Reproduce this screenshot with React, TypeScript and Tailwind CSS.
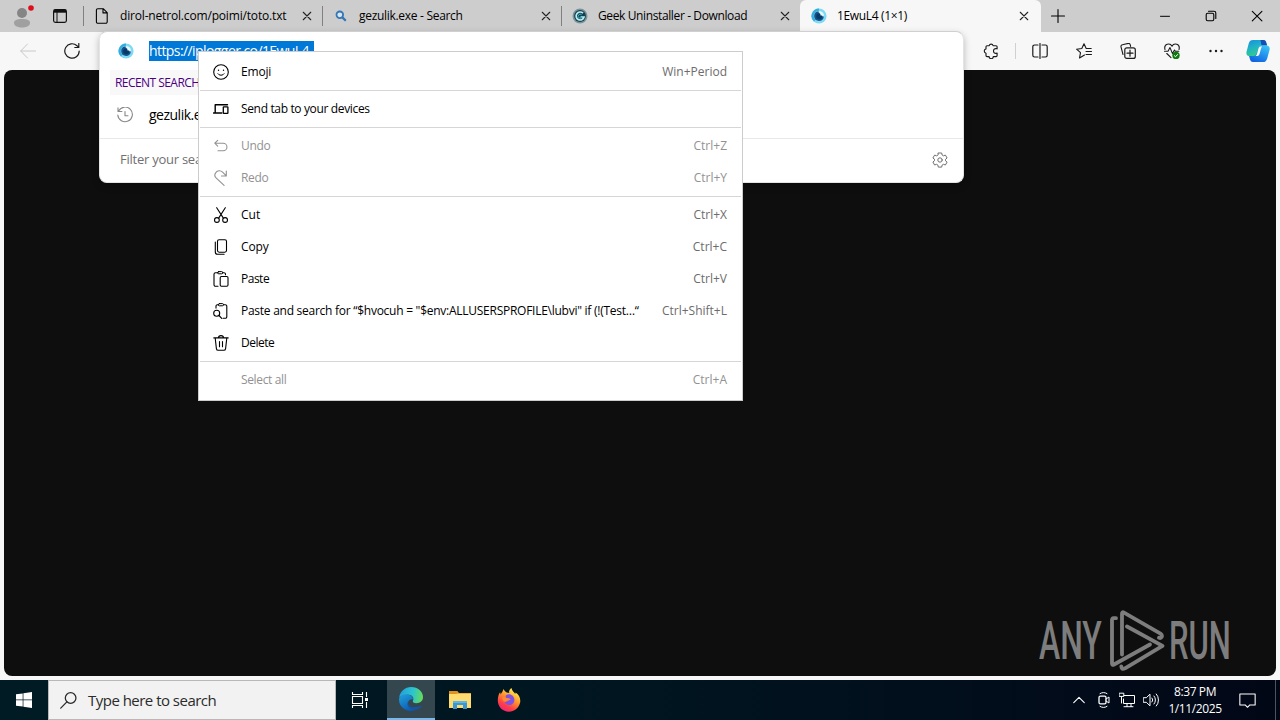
import type { ReactNode } from 'react';
import { clsx } from 'clsx';

interface IconProps {
  children: ReactNode;
  className?: string;
}

// 16px line icons, drawn with the current text colour
function Icon({ children, className }: IconProps) {
  return (
    <svg
      viewBox="0 0 16 16"
      fill="none"
      stroke="currentColor"
      strokeLinecap="round"
      strokeLinejoin="round"
      className={clsx('shrink-0', className || 'size-4')}
    >
      {children}
    </svg>
  );
}

function CloseIcon() {
  return (
    <Icon className="size-[10px] text-[#222]">
      <path d="M2 2l12 12M14 2L2 14" strokeWidth="1.7" />
    </Icon>
  );
}

function EyeLogo() {
  return (
    <svg viewBox="0 0 16 16" className="size-4 shrink-0">
      <circle cx="8" cy="8" r="7.6" fill="#7ddaf5" />
      <path d="M8 .4a7.6 7.6 0 0 0-5 13.2L8 8z" fill="#35aede" />
      <circle cx="8" cy="8" r="5.2" fill="#c4eefa" />
      <path d="M7.5 3.2a4.9 4.9 0 1 0 5.4 5.3L8.5 8z" fill="#10558c" />
      <circle cx="8.2" cy="8.2" r="3" fill="#073a6b" />
      <path d="M8.7 3.4a4.8 4.8 0 0 1 4 4H9.6z" fill="#e9faff" />
    </svg>
  );
}

function GeekLogo() {
  return (
    <svg viewBox="0 0 16 16" className="size-4 shrink-0">
      <circle cx="8" cy="8" r="7.5" fill="#7c9299" />
      <circle cx="8" cy="8" r="5.9" fill="#17404c" />
      <path d="M11 5.2A4 4 0 1 0 12 9H8.5" fill="none" stroke="#b5edf4" strokeWidth="1.7" />
      <path d="M9.6 6.8A2 2 0 1 0 10 9" fill="none" stroke="#3cb6c9" strokeWidth="1" />
    </svg>
  );
}

function SearchLogo() {
  return (
    <svg viewBox="0 0 16 16" fill="none" stroke="#3475b5" className="size-4 shrink-0">
      <circle cx="6.8" cy="6.8" r="3.3" strokeWidth="1.8" fill="#d8e7f2" />
      <path d="M9.4 9.4l3.4 3.4" strokeWidth="2.2" />
    </svg>
  );
}

function FileIcon() {
  return (
    <Icon>
      <path d="M3.8.7h5.4l4 4v9.1a1.4 1.4 0 0 1-1.4 1.4H3.8a1.4 1.4 0 0 1-1.4-1.4V2.1A1.4 1.4 0 0 1 3.8.7zM9 .8v4.1h4.1" strokeWidth="1.1" />
    </Icon>
  );
}

interface TabProps {
  icon: ReactNode;
  title: string;
  titleClass: string;
  active?: boolean;
}

function Tab({ icon, title, titleClass, active }: TabProps) {
  return (
    <div
      className={clsx(
        'flex h-8 shrink-0 items-center',
        active
          ? '-ml-px w-[241px] rounded-t-md bg-[#f7f7f7] pr-3 pl-[11px]'
          : 'w-[239px] border-r border-[#808080] pr-[10px] pl-[10px]'
      )}
    >
      {icon}
      <span className={clsx('ml-[10px] flex-1 text-xs whitespace-nowrap text-black', titleClass)}>{title}</span>
      <CloseIcon />
    </div>
  );
}

function TabBar() {
  return (
    <div className="flex h-8 shrink-0 items-center bg-[#cdcdcd]">
      <svg viewBox="0 0 24 24" className="ml-[10px] size-6 shrink-0">
        <circle cx="12" cy="9" r="5" fill="#858585" />
        <path d="M4 19c0-3 3-4 8-4s8 1 8 4-4 4.5-8 4.5S4 22 4 19z" fill="#a0a0a0" />
        <circle cx="21" cy="4" r="2.8" fill="#e00b1c" />
      </svg>
      <svg viewBox="0 0 16 16" className="ml-[18px] size-4 shrink-0" fill="none" stroke="#111">
        <rect x="1.6" y="1.6" width="12.8" height="12.8" rx="1.8" strokeWidth="1.2" />
        <path d="M2 3.2h12" strokeWidth="3" />
        <path d="M5 4v10.4" strokeWidth="1" />
      </svg>
      <div className="ml-[15px] h-5 w-px shrink-0 bg-[#808080]" />
      <div className="flex h-5 items-center overflow-hidden">
        <Tab icon={<FileIcon />} title="dirol-netrol.com/poimi/toto.txt" titleClass="tracking-[-0.17px]" />
        <Tab icon={<SearchLogo />} title="gezulik.exe - Search" titleClass="tracking-[-0.3px]" />
        <Tab icon={<GeekLogo />} title="Geek Uninstaller - Download" titleClass="tracking-[-0.38px]" />
      </div>
      <Tab icon={<EyeLogo />} title="1EwuL4 (1×1)" titleClass="tracking-[-0.35px]" active />
      <div className="flex flex-1 items-center text-black">
        <Icon className="ml-[9px] size-4">
          <path d="M8 1.5v13M1.5 8h13" strokeWidth="1.1" />
        </Icon>
        <div className="ml-auto flex">
          <div className="flex w-[46px] justify-center">
            <Icon>
              <path d="M3.5 8.3h9" />
            </Icon>
          </div>
          <div className="flex w-[46px] justify-center">
            <Icon>
              <rect x="3.2" y="5.2" width="7.6" height="7.6" rx="1.5" strokeWidth="1.1" />
              <path d="M5.5 3.2H11a1.8 1.8 0 0 1 1.8 1.8v5.5" strokeWidth="1.1" />
            </Icon>
          </div>
          <div className="flex w-[46px] justify-center">
            <Icon>
              <path d="M3.3 3.3l9.6 9.6M12.9 3.3l-9.6 9.6" strokeWidth="1.1" />
            </Icon>
          </div>
        </div>
      </div>
    </div>
  );
}

function CopilotLogo() {
  return (
    <svg viewBox="0 0 24 24" className="size-6">
      <defs>
        <linearGradient id="copA" x1="0" y1="0" x2="0.5" y2="1">
          <stop offset="0" stopColor="#178ce0" />
          <stop offset="0.5" stopColor="#20b4c5" />
          <stop offset="1" stopColor="#35cf80" />
        </linearGradient>
        <linearGradient id="copB" x1="0.8" y1="0" x2="0.3" y2="1">
          <stop offset="0" stopColor="#39c4f7" />
          <stop offset="1" stopColor="#1062e2" />
        </linearGradient>
      </defs>
      <path d="M12 1h5.2c2 0 2.5 1.1 3.1 3l.7 2.5h-4c-2 0-3 1-3.5 3L11 17H3.5C.8 17 0 14.8.6 12.4L2.8 4.3C3.6 1.9 4.7 1 7 1z" fill="url(#copA)" />
      <path d="M14.5 1h2.8c2 0 2.5 1.1 3.1 3l.7 2.5h-5.6z" fill="#164db6" />
      <path d="M12 23H7c-2 0-2.5-1.1-3.1-3L3 17h4.3c2 0 3-1 3.5-3L13 6.5h7.5c2.8 0 3.6 2.2 3 4.6l-2.3 8.3c-.8 2.5-1.9 3.6-4.2 3.6z" fill="url(#copB)" />
      <path d="M9.8 16.9c.8-.8 1.1-1.6 1.4-2.7l1.3-4.6c.4-1.3 1-2 2.4-2h1.3c-.8.8-1.1 1.6-1.4 2.7l-1.3 4.6c-.4 1.3-1 2-2.4 2z" fill="#fff" />
    </svg>
  );
}

function ToolButton({ children }: { children: ReactNode }) {
  return <div className="flex w-11 justify-center">{children}</div>;
}

function Toolbar() {
  return (
    <div className="flex h-[38px] shrink-0 items-center bg-[#f7f7f7] text-[#1b1b1b]">
      <Icon className="ml-5 size-4 text-[#c8c8c8]">
        <path d="M15.5 8H.8M7.5 1L.7 8l6.8 7" />
      </Icon>
      <Icon className="ml-7 size-4">
        <path d="M15.2 8A7.2 7.2 0 1 1 13 2.8L14.5 4M14.8.5v4h-4" strokeWidth="1.2" />
      </Icon>
      <div className="ml-auto flex items-center">
        <Icon className="mr-4 size-4">
          <path
            d="M4 2.7h2.2a2 2 0 0 1 3.9 0h3c.6 0 1 .4 1 1v2.1c-2.4-.7-3.6.5-3.6 2.2s1.3 2.8 3.6 2.1v2.5c0 .6-.4 1-1 1h-2.8a2.1 2.1 0 0 1-4.2 0H4c-.6 0-1-.4-1-1v-2.4a2.2 2.2 0 0 1 0-4.3V3.7c0-.6.4-1 1-1z"
            strokeWidth="1.15"
          />
        </Icon>
        <div className="mr-[2px] h-4 w-px bg-[#d0d0d0]" />
        <ToolButton>
          <Icon>
            <path d="M6 2H2.5A1.7 1.7 0 0 0 .8 3.7v8.6A1.7 1.7 0 0 0 2.5 14H6M10 2h3.5a1.7 1.7 0 0 1 1.7 1.7v8.6a1.7 1.7 0 0 1-1.7 1.7H10M8 .5v15" strokeWidth="1.2" />
          </Icon>
        </ToolButton>
        <ToolButton>
          <Icon>
            <path d="M8.5 12l-5 3 1-5.3L.6 6.2l5.2-.7L8 .8l2.2 4.7h5M10 8.5h5.5M10 11.5h5.5" strokeWidth="1.1" />
          </Icon>
        </ToolButton>
        <ToolButton>
          <Icon>
            <path d="M3 11.5l-2-7.6A1.8 1.8 0 0 1 2.4 1.7L8.2.4a1.8 1.8 0 0 1 2.1 1.5l.3 1.5" strokeWidth="1.1" />
            <rect x="4.8" y="4.8" width="10.5" height="10.6" rx="2" strokeWidth="1.2" />
            <path d="M10 7.2v6M7 10.2h6" strokeWidth="1.2" />
          </Icon>
        </ToolButton>
        <ToolButton>
          <Icon>
            <path d="M1 6.5C-.5.7 6-.5 8 3.2 10-.5 16.5.7 15 6.5M.5 8.3H4l2-3.7 2.5 6 2-3.5.8 1.2h3.5M2.8 10.5L7 14.7" strokeWidth="1.1" />
            <circle cx="12" cy="12.5" r="3.7" fill="#0e7a0d" stroke="none" />
            <path d="M10.4 12.7l1.1 1.1 2.1-2.3" stroke="#fff" strokeWidth="1" />
          </Icon>
        </ToolButton>
        <ToolButton>
          <Icon>
            <g fill="currentColor" stroke="none">
              <circle cx="2.5" cy="8" r="1.2" />
              <circle cx="8" cy="8" r="1.2" />
              <circle cx="13.5" cy="8" r="1.2" />
            </g>
          </Icon>
        </ToolButton>
        <div className="mr-[10px] ml-2">
          <CopilotLogo />
        </div>
      </div>
    </div>
  );
}

function AddressDropdown() {
  return (
    <div className="absolute top-[31px] left-[99px] flex h-[152px] w-[865px] flex-col rounded-lg border border-[#e4e4e4] border-t-[#d0d0d0] bg-white shadow-[0_3px_7px_rgba(0,0,0,0.25)]">
      <div className="flex h-[38px] items-center pl-[18px]">
        <EyeLogo />
        <span className="ml-[15px] h-5 w-[165px] bg-[#0078d7] text-sm leading-[20px] tracking-[-0.58px] whitespace-nowrap text-white">
          https://iplogger.co/1EwuL4
        </span>
      </div>
      <div className="ml-[10px] flex h-[25px] w-[120px] items-center bg-[#f8f8f8] pl-[5px] text-xs tracking-[-0.55px] text-[#4b0082]">
        RECENT SEARCHES
      </div>
      <div className="flex h-[43px] items-center pb-[3px] pl-[17px]">
        <Icon className="size-4 text-[#888]">
          <path d="M1.6 4A7.3 7.3 0 1 1 .8 8M1 .8V4.5h3.9M8 4.5v4.3h3" strokeWidth="1.1" />
        </Icon>
        <span className="ml-4 text-sm tracking-[-0.5px] text-black">gezulik.exe</span>
      </div>
      <div className="flex flex-1 items-center border-t border-[#e8e8e8] pr-[15px] pb-px pl-5 text-[#707070]">
        <span className="flex-1 text-[13px] tracking-[-0.25px]">Filter your search</span>
        <Icon>
          <circle cx="8" cy="8" r="2.2" />
          <path d="M6.3 1h3.4l.4 2 1.3.8 2-.7 1.7 2.9-1.6 1.3v1.5l1.6 1.3-1.7 2.9-2-.7-1.3.8-.4 2H6.3l-.4-2-1.3-.8-2 .7L.9 10l1.6-1.3V7.2L.9 6l1.7-2.9 2 .7L5.9 3z" />
        </Icon>
      </div>
    </div>
  );
}

interface MenuItem {
  label: string;
  labelClass?: string;
  shortcut?: string;
  disabled?: boolean;
  icon?: ReactNode;
}

const menuGroups: MenuItem[][] = [
  [
    {
      label: 'Emoji',
      labelClass: 'tracking-[-0.2px]',
      shortcut: 'Win+Period',
      icon: (
        <>
          <circle cx="8" cy="8" r="7.3" strokeWidth="1.1" />
          <path d="M4.9 9.7a3.6 3.6 0 0 0 6.2 0" />
          <circle cx="5.5" cy="6.2" r=".7" fill="currentColor" stroke="none" />
          <circle cx="10.5" cy="6.2" r=".7" fill="currentColor" stroke="none" />
        </>
      )
    }
  ],
  [
    {
      label: 'Send tab to your devices',
      icon: (
        <>
          <path d="M2.2 11V3.8h12.3M.5 12h8.3" strokeWidth="1.4" />
          <rect x="10.3" y="5.8" width="4.6" height="6.6" rx=".5" strokeWidth="1.3" />
        </>
      )
    }
  ],
  [
    {
      label: 'Undo',
      shortcut: 'Ctrl+Z',
      disabled: true,
      icon: <path d="M4.7 2.3L1.8 5.2l2.9 2.9M2 5.2h8.2a3.6 3.6 0 0 1 0 7.5H5" strokeWidth="1.1" />
    },
    {
      label: 'Redo',
      shortcut: 'Ctrl+Y',
      disabled: true,
      icon: <path d="M13.3 1v5H8.5M13 5.6L9.6 2.1a4.4 4.4 0 0 0-6.8.5 4.2 4.2 0 0 0 .5 5.6l7.8 7.1" strokeWidth="1.1" />
    }
  ],
  [
    {
      label: 'Cut',
      labelClass: 'tracking-normal',
      shortcut: 'Ctrl+X',
      icon: (
        <>
          <path d="M3.7.7l6.5 10.2M12.3.7L5.8 10.9" strokeWidth="1.1" />
          <circle cx="3.9" cy="13" r="2.4" strokeWidth="1.1" />
          <circle cx="12.1" cy="13" r="2.4" strokeWidth="1.1" />
        </>
      )
    },
    {
      label: 'Copy',
      labelClass: 'tracking-[-0.1px]',
      shortcut: 'Ctrl+C',
      icon: (
        <>
          <rect x="4.5" y=".7" width="9" height="12.5" rx="1.6" strokeWidth="1.1" />
          <path d="M2.3 3v10a2.3 2.3 0 0 0 2.3 2.3h6.5" strokeWidth="1.1" />
        </>
      )
    },
    {
      label: 'Paste',
      labelClass: 'tracking-[-0.5px]',
      shortcut: 'Ctrl+V',
      icon: (
        <>
          <path d="M5 1.7H2.5A1.5 1.5 0 0 0 1 3.2v10.6a1.5 1.5 0 0 0 1.5 1.5H5M9.5 1.7H11a1.5 1.5 0 0 1 1.5 1.5v.5" strokeWidth="1.1" />
          <rect x="4.6" y=".6" width="5.2" height="2.2" rx="1.1" />
          <rect x="7.2" y="5.5" width="7.8" height="9.8" rx="1.2" strokeWidth="1.1" />
        </>
      )
    },
    {
      label: 'Paste and search for “$hvocuh = "$env:ALLUSERSPROFILE\\lubvi" if (!(Test…“',
      labelClass: 'tracking-[-0.26px]',
      shortcut: 'Ctrl+Shift+L',
      icon: (
        <>
          <path d="M5.5 1.7H4.4A1.4 1.4 0 0 0 3 3.1v2M10.5 1.7h1.8a1.5 1.5 0 0 1 1.5 1.5v10.6a1.5 1.5 0 0 1-1.5 1.5H10" strokeWidth="1.1" />
          <rect x="5.3" y=".6" width="5.2" height="2.2" rx="1.1" />
          <circle cx="3.7" cy="10.3" r="3" strokeWidth="1.1" />
          <path d="M6 12.5l2.7 2.8" strokeWidth="1.1" />
        </>
      )
    },
    {
      label: 'Delete',
      labelClass: 'tracking-[-0.5px]',
      icon: (
        <path d="M.8 2.9h14.4M5.5 2.7C5.5-.1 10.5-.1 10.5 2.7M2.2 3l1.2 10.6a1.9 1.9 0 0 0 1.9 1.7h5.4a1.9 1.9 0 0 0 1.9-1.7L13.8 3M6.5 6.5v5.3M9.5 6.5v5.3" strokeWidth="1.1" />
      )
    }
  ],
  [{ label: 'Select all', shortcut: 'Ctrl+A', disabled: true }]
];

function ContextMenu() {
  return (
    <div className="absolute top-[51px] left-[198px] h-[350px] w-[545px] border border-[#cccccc] bg-white pt-1 text-xs">
      {menuGroups.map((group, i) => (
        <div key={i}>
          {i > 0 && <div className="mx-px my-0.5 h-px bg-[#d6d6d6]" />}
          {group.map((item) => (
            <div
              key={item.label}
              className={clsx(
                'flex h-8 items-center pr-[15px] pl-[14px] whitespace-nowrap',
                item.disabled ? 'text-[#929292]' : 'text-black'
              )}
            >
              <Icon>{item.icon}</Icon>
              <span className={clsx('ml-3 flex-1', item.labelClass || 'tracking-[-0.35px]')}>{item.label}</span>
              {item.shortcut && (
                <span className={item.disabled ? 'text-[#929292]' : 'text-[#6c6c6c]'}>{item.shortcut}</span>
              )}
            </div>
          ))}
        </div>
      ))}
    </div>
  );
}

function Watermark() {
  return (
    <div className="flex h-[62px] w-[194px] items-center text-[#7d7d7d]">
      <div className="w-[70px] font-[Roboto] text-[54px] leading-[62px] font-medium">
        <span className="inline-block origin-left scale-x-[0.59]">ANY</span>
      </div>
      <svg
        viewBox="0 0 56 62"
        fill="none"
        stroke="currentColor"
        strokeWidth="3.8"
        strokeLinejoin="round"
        strokeLinecap="round"
        className="h-[62px] w-14 shrink-0"
      >
        <path d="M7 8.2H4.5Q3 8.2 3 10v43.5q0 2 2 1L41 34.5" />
        <path d="M13 44.5V3.8q0-2.3 2-1.2l36.5 21q1.8 1.2 1.3 3.2-.8 1.7-2.8 1" />
        <path d="M18 16.5l35.5 19.3L16 58.3q-3.5 1.7-3.7-1.8" />
      </svg>
      <div className="ml-1 w-[62px] font-[Roboto] text-[54px] leading-[62px] font-medium">
        <span className="inline-block origin-left scale-x-[0.575]">RUN</span>
      </div>
    </div>
  );
}

function EdgeLogo() {
  return (
    <svg viewBox="0 0 24 24" className="size-6">
      <defs>
        <linearGradient id="edgeTop" x1="0" y1="0.4" x2="1" y2="0.5">
          <stop offset="0" stopColor="#249fd9" />
          <stop offset="0.55" stopColor="#2bc4d0" />
          <stop offset="1" stopColor="#67dc59" />
        </linearGradient>
        <linearGradient id="edgeBody" x1="0" y1="0" x2="0.6" y2="1">
          <stop offset="0" stopColor="#20a2dc" />
          <stop offset="1" stopColor="#0c58b0" />
        </linearGradient>
      </defs>
      <path d="M.2 10.5C1.1 4.2 6 0 12.2 0 19 0 24 4.8 24 10c0 4-3 6.2-6.6 6.2-2.7 0-4.1-1-3.5-2.2 1.7-3.4-.9-6.1-4-6.3C5 7.5 1.7 9 .2 10.5z" fill="url(#edgeTop)" />
      <path d="M.1 11.5C1 8.4 5.6 7 8.7 7.4c3.1.4 5.8 2.6 5.4 5.3-1.8-1.1-5.4.6-5.1 3.8.4 4 5.7 6.7 9.9 5.1C17 23.1 14.3 24 12 24 5 24-.7 18.4.1 11.5z" fill="url(#edgeBody)" />
      <path d="M9.1 13.9c-1.8 4 3.3 8.5 12.9 4.9.6-.2.9.2.5.7-1.1 1.5-2.9 2.6-4.8 3.1-6.8 1-11.1-4-8.6-8.7z" fill="#1654a0" />
    </svg>
  );
}

function FolderLogo() {
  return (
    <svg viewBox="0 0 24 24" className="size-6">
      <path d="M1 3h8l2 2h12v15H1z" fill="#f3ac36" />
      <path d="M1 6h22v14H1z" fill="#ffdb70" />
      <path d="M1 3h8l1.2 1.2L8 6H1z" fill="#df901f" />
      <path d="M5 13h14v8h-4v-4H9v4H5z" fill="#3998d3" />
      <path d="M5 13h14v2H5z" fill="#5eb5e8" />
    </svg>
  );
}

function FirefoxLogo() {
  return (
    <svg viewBox="0 0 24 24" className="size-6">
      <defs>
        <linearGradient id="fox" x1="0.8" y1="0.1" x2="0.3" y2="1">
          <stop offset="0" stopColor="#fff04f" />
          <stop offset="0.4" stopColor="#ff962d" />
          <stop offset="0.75" stopColor="#ff3c49" />
          <stop offset="1" stopColor="#eb2774" />
        </linearGradient>
      </defs>
      <path d="M1.5 7.5c.3-1.4 1-2.5 1.7-3.2l.5 2.2C4.5 4.9 5.7 3.7 6.5 1c.7 1.5 1.7 2.8 3.2 3.5l2.7.6C11.4 3.5 12.7 1.3 14.5 0c.3 2.6 2.4 3.8 3.8 6l.2-1.6C22.3 6.6 24 11 23 15c-1.3 5.2-5.8 8.7-11 8.7C5.5 23.7.8 18.8.8 12.6c0-1.9.2-3.7.7-5.1z" fill="url(#fox)" />
      <path d="M9 7.2c3.7-2.5 8.5.6 8.4 4.8-.1 3.5-3 5.4-5.8 5-2.5-.3-4.3-2.2-4.2-4.1 1.3 1.1 3.1.3 4.2-.5l2-.7c-.9-1.2-1.8-1.2-3.4-1.4C9.1 10.2 8 8.7 9 7.2z" fill="#8052e4" />
      <path d="M5 9.7c2-.7 3.5-.4 4.3.5l3.4.3c-.1 1.2-2.5 1-2.6 2.1-.5 1.4-2 1.4-3 .6.2 2-1-1-2.1-3.5z" fill="#ff8c31" />
    </svg>
  );
}

function Taskbar() {
  return (
    <div className="flex h-10 shrink-0 items-center bg-linear-to-r from-[#001b23] via-[#001520] to-[#020716] text-white">
      <div className="flex w-12 justify-center">
        <svg viewBox="0 0 16 16" className="size-4" fill="#fff">
          <path d="M0 2.3l6.7-.9v6.2H0zM7.4 1.3L16 0v7.6H7.4zM0 8.3h6.7v6.3L0 13.7zM7.4 8.3H16V16l-8.6-1.2z" />
        </svg>
      </div>
      <div className="flex h-10 w-72 items-center border border-[#b8b8b8] bg-[#f2f2f2] pl-[11px] text-[#2b2b2b]">
        <Icon className="size-[17px]">
          <circle cx="10" cy="5.6" r="5" strokeWidth="1.2" />
          <path d="M6.5 9.3L.7 15.2" strokeWidth="1.2" />
        </Icon>
        <span className="ml-[11px] text-[15px] tracking-[-0.52px]">Type here to search</span>
      </div>
      <div className="flex w-[51px] justify-center pr-1">
        <svg viewBox="0 0 18 18" className="size-[18px]" fill="none" stroke="#fff" strokeWidth="1.1">
          <path d="M1.5 1v2.5h10V1M1.5 17v-2.5h10V17M1.5 5.5h10v7h-10zM15.5 1v5M15.5 11v6" />
          <path d="M14 7h3v3h-3z" fill="#fff" stroke="none" />
        </svg>
      </div>
      <div className="flex h-10 w-12 items-center justify-center border-b-2 border-[#76b9ed] bg-[#34474f]">
        <EdgeLogo />
      </div>
      <div className="ml-[13px]">
        <FolderLogo />
      </div>
      <div className="ml-[25px]">
        <FirefoxLogo />
      </div>
      <div className="ml-auto flex h-10 items-center">
        <Icon className="size-[14px]">
          <path d="M2 11l6-6 6 6" strokeWidth="1.3" />
        </Icon>
        <Icon className="ml-[10px] size-4">
          <rect x="3" y="4.2" width="7" height="7.6" rx="1.4" strokeWidth="1.3" />
          <path d="M10 7l3-2v6l-3-2M4 1.6c2-1.4 5-1.4 7 0M4 14.4c2 1.4 5 1.4 7 0" />
        </Icon>
        <Icon className="ml-[7px] size-4">
          <path d="M5 3.5h10.5v8H4.5V7M8 11.5v3M12 11.5v3M5 14.7h9M.5 1.2h4.3v3.2H.5zM2.5 4.5V11" />
        </Icon>
        <Icon className="ml-2 size-4">
          <path d="M.6 5.7h2.7L7 2.2v11.6l-3.7-3.5H.6z" />
          <path d="M9 6a3 3 0 0 1 0 4M11 4a6 6 0 0 1 0 8M13.3 2a9 9 0 0 1 0 12" />
        </Icon>
        <div className="ml-[9px] flex w-[54px] flex-col items-center text-xs leading-[17px] tracking-[-0.4px] whitespace-nowrap">
          <span>8:37 PM</span>
          <span>1/11/2025</span>
        </div>
        <Icon className="ml-[17px] size-[17px]">
          <path d="M.8 1.8h14.4v10.4h-5L8 14.4l-2.2-2.2h-5z" />
        </Icon>
        <div className="mr-1 ml-[19px] h-10 w-px bg-[#4b5562]" />
      </div>
    </div>
  );
}

export default function App() {
  return (
    <div className="relative flex h-[720px] w-[1280px] flex-col overflow-hidden bg-[#f7f7f7] font-['Open_Sans','Noto_Sans',sans-serif]">
      <TabBar />
      <Toolbar />
      <main className="mx-1 mb-1 flex flex-1 items-end justify-end rounded-lg bg-[#0e0e0e] pr-[43px] pb-1">
        <Watermark />
      </main>
      <Taskbar />
      <AddressDropdown />
      <ContextMenu />
    </div>
  );
}
